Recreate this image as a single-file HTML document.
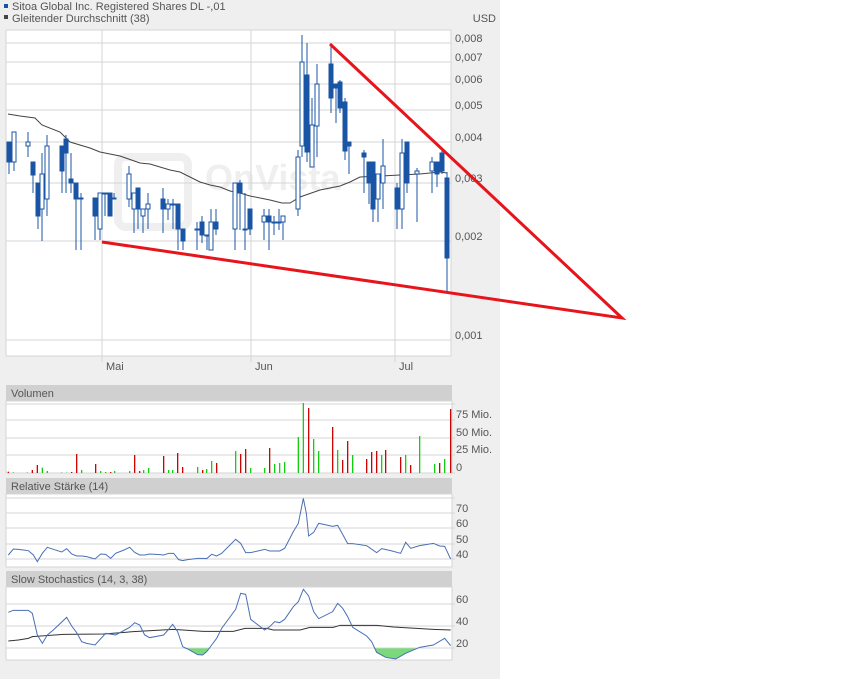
<!DOCTYPE html>
<html><head><meta charset="utf-8"><style>
body{margin:0;background:#fff;width:850px;height:691px;overflow:hidden;font-family:"Liberation Sans",sans-serif}
svg text{font-family:"Liberation Sans",sans-serif;font-size:11px;fill:#555}
</style></head><body>
<svg id="s" width="850" height="691" xmlns="http://www.w3.org/2000/svg">
<rect x="0" y="0" width="500" height="679" fill="#efefef"/>
<rect x="6" y="30" width="445" height="326" fill="#fff" stroke="#d6d6d6"/>
<g id="g"></g>
</svg>
<script>
var S=document.getElementById('g'),h='';
function L(x1,y1,x2,y2,c,w){h+='<line x1="'+x1+'" y1="'+y1+'" x2="'+x2+'" y2="'+y2+'" stroke="'+c+'" stroke-width="'+(w||1)+'"/>';}
function T(x,y,t,a){h+='<text x="'+x+'" y="'+y+'"'+(a?' text-anchor="'+a+'"':'')+'>'+t+'</text>';}
function P(pts,c,w){h+='<polyline fill="none" stroke="'+c+'" stroke-width="'+(w||1)+'" points="'+pts.map(function(p){return p.join(',')}).join(' ')+'"/>';}
h+='<rect x="4" y="4" width="4" height="4" fill="#1a54a4"/><rect x="4" y="15" width="4" height="4" fill="#444"/>';
T(12,10,'Sitoa Global Inc. Registered Shares DL -,01');T(12,22,'Gleitender Durchschnitt (38)');T(496,22,'USD','end');
h+='<rect x="118" y="157" width="70" height="70" rx="8" fill="none" stroke="#efefef" stroke-width="8"/>';
h+='<text x="205" y="190" style="font-size:36px;font-weight:bold;fill:#efefef">OnVista</text>';
[43,62,84,110,142,183,241,340].forEach(function(y){L(6,y,451,y,'#d6d6d6')});
[102,251,395].forEach(function(x){L(x,30,x,356,'#d6d6d6');L(x,356,x,362,'#d6d6d6')});
[['0,008',43],['0,007',62],['0,006',84],['0,005',110],['0,004',142],['0,003',183],['0,002',241],['0,001',340]].forEach(function(a){T(455,a[1]-1,a[0])});
T(106,370,'Mai');T(255,370,'Jun');T(399,370,'Jul');
P([[8,114],[20,116],[35,118],[42,125],[60,132],[70,142],[90,148],[100,152],[120,156],[140,163],[150,164],[170,170],[180,172],[200,182],[210,185],[220,187],[230,191],[240,193],[250,196],[270,200],[282,203],[290,203],[300,197],[320,190],[340,186],[350,182],[360,177],[380,176],[400,175],[420,174],[440,172],[447,173]],'#444');
var C=[[9,142,162,142,174,1],[14,132,162,132,171,0],[28,142,146,132,157,0],[33,162,175,162,193,1],[38,183,216,183,229,1],[42,174,209,153,241,0],[47,146,199,135,216,0],[62,146,171,146,193,1],[66,139,153,135,193,1],[71,179,183,153,193,1],[76,183,199,183,250,1],[81,198,199,193,250,1],[95,198,216,198,240,1],[100,193,229,193,240,0],[105,193,194,193,216,1],[110,193,216,193,216,1],[114,198,199,193,199,1],[129,174,199,166,207,0],[134,193,209,193,233,0],[138,188,209,188,229,1],[143,209,216,209,233,0],[148,204,209,193,229,0],[163,199,209,188,233,1],[168,204,209,199,220,0],[173,204,205,199,229,1],[178,204,229,204,250,1],[183,229,241,229,250,1],[197,229,230,222,250,1],[202,222,235,216,243,1],[207,235,236,235,250,1],[211,222,250,209,250,0],[216,222,229,209,235,1],[235,183,229,183,250,0],[240,183,193,180,230,1],[245,229,230,193,250,1],[250,209,229,209,235,1],[264,216,222,209,240,0],[269,216,222,209,250,1],[274,222,223,216,235,1],[279,222,223,209,230,1],[283,216,222,216,240,0],[298,157,209,150,216,0],[302,62,146,35,157,0],[307,75,152,43,162,1],[312,125,167,98,167,0],[317,84,126,64,157,0],[331,64,98,45,113,1],[336,84,88,84,123,1],[340,82,108,80,113,1],[345,102,151,98,160,1],[349,142,146,142,174,1],[364,153,157,150,193,1],[369,162,183,162,204,1],[373,162,209,162,222,1],[378,174,199,174,222,0],[383,166,183,139,209,0],[397,188,209,183,229,1],[402,153,209,139,229,0],[407,142,183,142,193,1],[417,171,174,168,222,0],[432,162,171,157,193,0],[437,162,174,162,187,1],[442,153,171,150,174,1],[447,178,258,172,292,1]];
C.forEach(function(c){L(c[0],c[3],c[0],c[4],'#1a54a4');h+='<rect x="'+(c[0]-2)+'" y="'+c[1]+'" width="4" height="'+Math.max(1,c[2]-c[1])+'" fill="'+(c[5]?'#1a54a4':'#fff')+'" stroke="#1a54a4" stroke-width="1"/>';});
P([[102,242],[622,318],[330,44]],'#e8141c',3);
function panel(y0,y1,title,grid,labels){h+='<rect x="6" y="'+y0+'" width="446" height="16" fill="#d0d0d0"/>';h+='<rect x="6" y="'+(y0+16)+'" width="446" height="'+(y1-y0-16)+'" fill="#fff" stroke="#d6d6d6"/>';T(11,y0+12,title);grid.forEach(function(y){L(6,y,455,y,'#d6d6d6')});labels.forEach(function(l){T(456,l[1],l[0])});}
panel(385,473,'Volumen',[404,420,438,455,473],[['75 Mio.',418],['50 Mio.',436],['25 Mio.',453],['0',471]]);
panel(478,567,'Relative Stärke (14)',[498,513,528,544,559],[['70',512],['60',527],['50',543],['40',558]]);
panel(571,660,'Slow Stochastics (14, 3, 38)',[604,626,648],[['60',603],['40',625],['20',647]]);
var VX=[25,40,82,97,112,127,142,185,200,215,230,245,287,302,317,332,344,389,404,419,431,446,491,506,518,533,548,593,608,620,635,650,707,722,737,752,794,809,824,839,854,895,910,926,941,956,998,1013,1028,1043,1058,1100,1115,1130,1145,1157,1202,1217,1232,1259,1304,1319,1334,1352];
var VY=[395,397,398,390,375,383,393,398,398,396,342,390,372,393,396,396,393,393,345,393,390,384,348,390,390,339,381,381,390,387,363,369,333,342,327,384,384,324,372,369,366,291,189,204,297,333,261,330,360,303,345,357,336,333,345,330,351,345,375,288,372,369,357,207];
var VC='rgrrrggrgrrgrggrggrrggrggrrgrggrgrrggrgggggrggrgrrgrrrgrrgrggrgr';
VX.forEach(function(x,i){var c=VC[i]=='g'?'#1c1':'#c00';L(x/3,340+VY[i]/3,x/3,473,c,1.3)});
function M(a){return a.map(function(p){return [p[0]/3,340+p[1]/3]})}
P(M([[25,645],[40,627],[55,628],[70,630],[85,632],[100,645],[112,665],[127,640],[142,622],[160,628],[185,636],[200,626],[215,642],[230,648],[245,648],[260,650],[285,657],[302,642],[317,643],[332,655],[347,640],[372,630],[389,622],[404,637],[419,645],[434,645],[449,642],[479,644],[491,645],[506,640],[521,640],[536,659],[548,662],[563,659],[593,655],[608,655],[620,656],[635,643],[650,648],[665,640],[707,598],[722,610],[737,638],[752,638],[794,628],[809,633],[839,633],[854,625],[880,575],[895,550],[910,475],[919,520],[926,588],[941,577],[956,550],[971,553],[998,559],[1013,556],[1028,583],[1043,611],[1058,611],[1100,617],[1130,638],[1145,626],[1172,632],[1202,640],[1217,607],[1232,625],[1259,617],[1300,610],[1319,618],[1334,619],[1352,657]]),'#4a6fb5');
h+='<polygon fill="#7ad97a" points="'+M([[548,925],[563,927],[593,944],[608,945],[620,935],[630,925]]).join(' ')+'"/>';
h+='<polygon fill="#7ad97a" points="'+M([[1122,925],[1130,937],[1157,952],[1187,957],[1217,940],[1252,925]]).join(' ')+'"/>';
P(M([[25,903],[55,900],[85,895],[97,890],[190,883],[310,882],[400,875],[520,868],[610,874],[700,874],[735,865],[800,865],[820,870],[900,870],[930,862],[1000,862],[1020,856],[1130,856],[1180,861],[1300,868],[1352,870]]),'#333');
P(M([[25,817],[40,811],[85,811],[97,820],[112,885],[127,910],[142,885],[160,870],[200,832],[215,858],[230,878],[245,905],[260,910],[285,915],[317,880],[347,885],[389,862],[404,848],[419,855],[434,885],[449,893],[491,885],[506,868],[518,853],[533,875],[548,920],[563,927],[593,944],[608,945],[620,935],[635,915],[650,895],[665,865],[707,808],[722,760],[737,763],[752,838],[794,870],[809,860],[824,845],[839,848],[854,838],[880,800],[895,785],[910,748],[926,768],[941,815],[956,836],[998,815],[1013,790],[1028,805],[1043,830],[1058,862],[1100,888],[1115,905],[1130,937],[1157,952],[1187,957],[1217,940],[1259,922],[1300,915],[1334,895],[1352,917]]),'#4a6fb5');
S.innerHTML=h;
</script>
</body></html>
